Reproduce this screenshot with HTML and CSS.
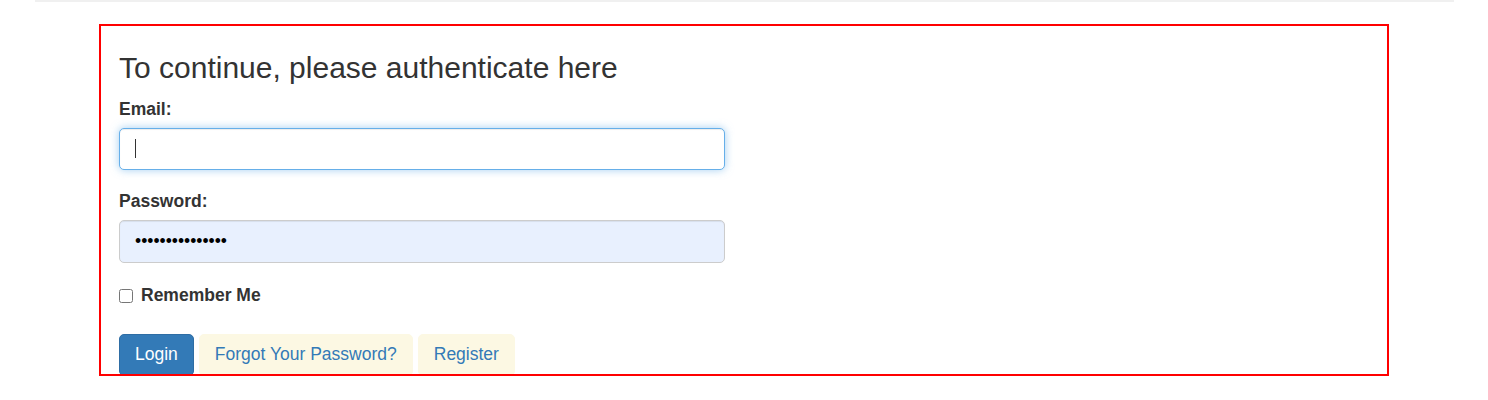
FILE: index.html
```html
<!DOCTYPE html>
<html lang="en">
<head>
<meta charset="utf-8">
<title>Login</title>
<link rel="stylesheet" href="styles.css">
</head>
<body>
<div class="topbar"></div>
<div class="frame">
  <h3 class="title">To continue, please authenticate here</h3>
  <form class="login-form">
    <div class="form-group">
      <label class="field-label" for="email">Email:</label>
      <div class="input-wrap">
        <input class="form-control is-focused" id="email" type="email" value="">
        <span class="caret"></span>
      </div>
    </div>
    <div class="form-group">
      <label class="field-label" for="password">Password:</label>
      <input class="form-control is-autofilled" id="password" type="password" value="secretpassword1">
    </div>
    <div class="checkbox">
      <label class="check-label"><input class="check-input" type="checkbox"> Remember Me</label>
    </div>
    <div class="actions">
      <button class="btn btn-primary" type="button">Login</button>
      <a class="btn btn-link" href="#">Forgot Your Password?</a>
      <a class="btn btn-link" href="#">Register</a>
    </div>
  </form>
</div>
</body>
</html>
```
FILE: styles.css
```css
* { box-sizing: border-box; }
html, body { margin: 0; padding: 0; background: #fff; }
body {
  font-family: "Liberation Sans", Arial, Helvetica, sans-serif;
  font-size: 17.5px;
  line-height: 1.42857;
  color: #333;
}
.topbar {
  margin-left: 35px;
  width: 1419px;
  height: 2px;
  background: #f0f0f0;
}
.frame {
  margin-top: 22px;
  margin-left: 99px;
  width: 1290px;
  height: 352px;
  border: 2px solid #ff0000;
  padding: 0 18px;
  overflow: hidden;
}
.title {
  margin: 25px 0 12.5px;
  font-size: 30px;
  font-weight: 500;
  line-height: 1.1;
  color: #333;
}
.login-form { width: 606px; }
.form-group { margin-bottom: 18.75px; }
.field-label {
  display: block;
  font-weight: bold;
  margin-bottom: 6.25px;
}
.input-wrap { position: relative; }
.form-control {
  display: block;
  width: 100%;
  height: 42.5px;
  padding: 7.5px 15px;
  font-family: inherit;
  font-size: 17.5px;
  line-height: 1.42857;
  color: #555;
  background: #fff;
  border: 1px solid #ccc;
  border-radius: 5px;
  outline: none;
}
.form-control.is-focused {
  border-color: #66afe9;
  box-shadow: inset 0 1px 1px rgba(0,0,0,.075), 0 0 8px rgba(102,175,233,.6);
}
.form-control.is-autofilled {
  background: #e8f0fe;
  color: #000;
  border-color: #ccc;
  box-shadow: inset 0 1px 1px rgba(0,0,0,.075);
}
.caret {
  position: absolute;
  left: 16px;
  top: 11px;
  width: 1px;
  height: 19px;
  background: #333;
}
.checkbox {
  margin: 0 0 26px;
  padding-top: 2px;
}
.check-label {
  display: flex;
  align-items: center;
  gap: 8px;
  font-weight: bold;
  min-height: 25px;
}
.check-input {
  width: 14px;
  height: 14px;
  margin: 0;
}
.actions {
  display: flex;
  gap: 5px;
}
.btn {
  display: inline-block;
  padding: 7px 15px 8px;
  font-family: inherit;
  font-size: 17.5px;
  line-height: 1.42857;
  border: 1px solid transparent;
  border-radius: 5px;
  text-decoration: none;
  white-space: nowrap;
  cursor: pointer;
}
.btn-primary {
  color: #fff;
  background: #337ab7;
  border-color: #2e6da4;
}
.btn-link {
  color: #337ab7;
  background: #fcf8e3;
  border-color: #fcf8e3;
}
```
